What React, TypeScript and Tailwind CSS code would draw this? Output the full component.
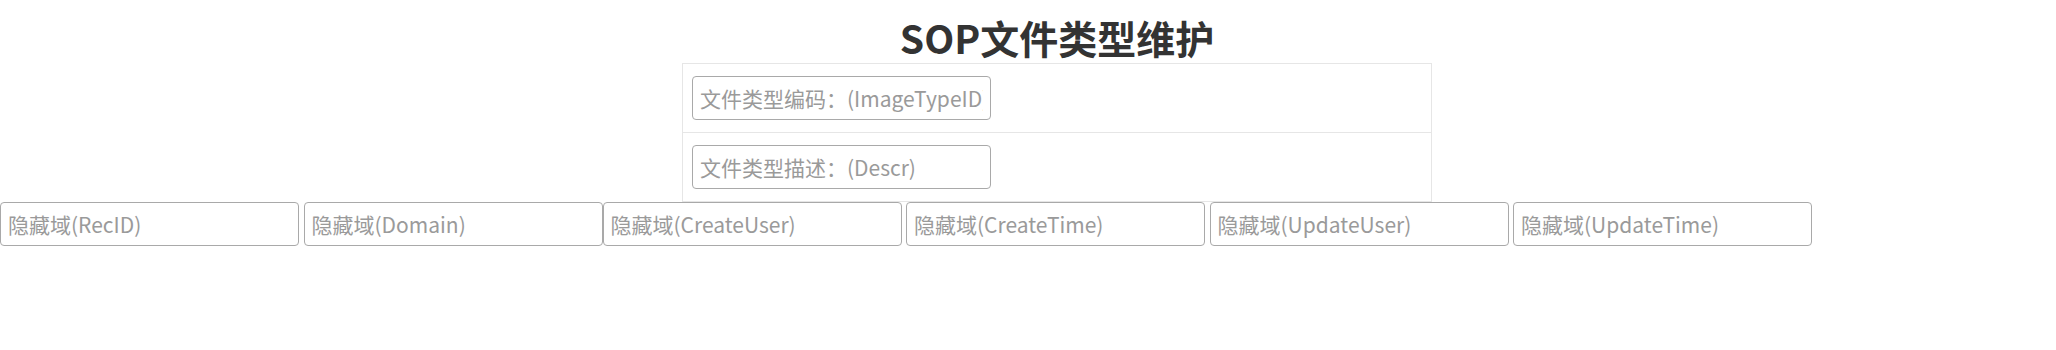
import React from "react";

const inputCls =
  "block h-[44px] w-[299px] shrink-0 rounded-[4px] border border-[#a9a9a9] bg-white px-[7px] text-[21px] text-[#333] outline-none placeholder:text-[#9a9a9a] [font-family:'Noto_Sans_CJK_SC',sans-serif]";

export default function App() {
  const hidden = [
    { p: "隐藏域(RecID)", gap: false },
    { p: "隐藏域(Domain)", gap: true },
    { p: "隐藏域(CreateUser)", gap: false },
    { p: "隐藏域(CreateTime)", gap: true },
    { p: "隐藏域(UpdateUser)", gap: true },
    { p: "隐藏域(UpdateTime)", gap: true },
  ];
  return (
    <div className="min-h-[350px] w-full bg-white [font-family:'Noto_Sans_CJK_SC',sans-serif]">
      <div className="ml-[682px] w-[750px]">
        <div className="h-[63px] pt-[9px] text-center text-[39px] font-bold leading-[56px] text-[#333]">
          SOP文件类型维护
        </div>
        <div className="border border-[#e6e6e6]">
          <div className="border-b border-[#e6e6e6] py-[12px] pl-[9px]">
            <input className={inputCls} placeholder="文件类型编码：(ImageTypeID)" />
          </div>
          <div className="py-[12px] pl-[9px]">
            <input className={inputCls} placeholder="文件类型描述：(Descr)" />
          </div>
        </div>
      </div>
      <div className="flex">
        {hidden.map((h, i) => (
          <input
            key={i}
            className={`${inputCls} ${i > 0 && h.gap ? "ml-[4.5px]" : "ml-0"}`}
            placeholder={h.p}
          />
        ))}
      </div>
    </div>
  );
}
